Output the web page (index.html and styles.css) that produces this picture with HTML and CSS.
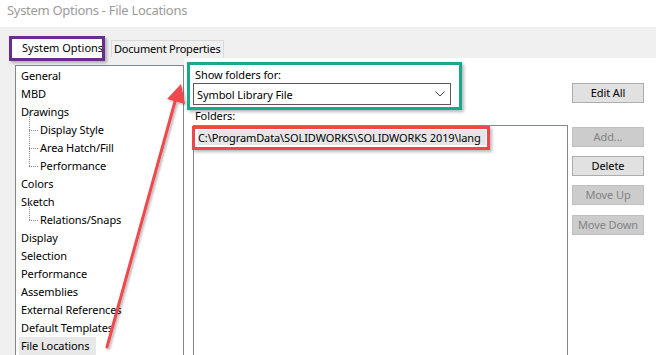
FILE: index.html
```html
<!DOCTYPE html>
<html>
<head>
<meta charset="utf-8">
<link rel="stylesheet" href="styles.css">
</head>
<body>
<div class="dialog">
  <div class="title">System Options - File Locations</div>
  <div class="tabs">
    <div class="tab active">System Options<span class="hl hl-purple"></span></div>
    <div class="tab">Document Properties</div>
  </div>
  <div class="main">
    <div class="tree">
      <div class="item">General</div>
      <div class="item">MBD</div>
      <div class="item">Drawings</div>
      <div class="group">
        <div class="item child">Display Style</div>
        <div class="item child">Area Hatch/Fill</div>
        <div class="item child last">Performance</div>
      </div>
      <div class="item">Colors</div>
      <div class="item">Sketch</div>
      <div class="group">
        <div class="item child last">Relations/Snaps</div>
      </div>
      <div class="item">Display</div>
      <div class="item">Selection</div>
      <div class="item">Performance</div>
      <div class="item">Assemblies</div>
      <div class="item">External References</div>
      <div class="item">Default Templates</div>
      <div class="item"><span class="sel">File Locations</span></div>
    </div>
    <div class="page">
      <div class="content">
        <div class="show">
          <div class="label">Show folders for:</div>
          <div class="combo">
            <span>Symbol Library File</span>
            <svg class="chev" width="10" height="6" viewBox="0 0 10 6"><path d="M0.5 0.5 L5 5 L9.5 0.5" fill="none" stroke="#444" stroke-width="1"/></svg>
          </div>
          <span class="hl hl-teal"></span>
        </div>
        <div class="label folders">Folders:</div>
        <div class="list">
          <div class="row">C:\ProgramData\SOLIDWORKS\SOLIDWORKS 2019\lang<span class="hl hl-red"></span></div>
        </div>
      </div>
      <div class="buttons">
        <div class="btn editall">Edit All</div>
        <div class="btn disabled">Add...</div>
        <div class="btn">Delete</div>
        <div class="btn disabled">Move Up</div>
        <div class="btn disabled">Move Down</div>
      </div>
    </div>
  </div>
  <svg class="arrow" width="656" height="355" viewBox="0 0 656 355">
    <defs>
      <filter id="sh" x="-20%" y="-20%" width="140%" height="140%">
        <feDropShadow dx="1.5" dy="1.5" stdDeviation="1.2" flood-color="#000" flood-opacity="0.3"/>
      </filter>
    </defs>
    <g filter="url(#sh)">
      <line x1="107" y1="347" x2="176" y2="98" stroke="#f0484b" stroke-width="3" stroke-linecap="round"/>
      <polygon points="181,84 167,99 185,104" fill="#f0484b"/>
    </g>
  </svg>
</div>
</body>
</html>
```
FILE: styles.css
```css
* { box-sizing: border-box; }
html, body { margin: 0; padding: 0; }
body {
  width: 656px;
  height: 355px;
  overflow: hidden;
  background: #f0f0f0;
  font-family: "Noto Sans", "Open Sans", sans-serif;
  font-size: 11px;
  letter-spacing: -0.1px;
  color: #000;
}
.dialog {
  position: relative;
  width: 656px;
  height: 355px;
  overflow: hidden;
}
.title {
  height: 27px;
  padding: 0 0 0 7px;
  font-size: 13px;
  letter-spacing: -0.3px;
  color: #9b9b9b;
  background: #fff;
  line-height: 20px;
}
.tabs {
  display: flex;
  align-items: flex-end;
  height: 31px;
  padding-left: 11px;
  gap: 7px;
}
.tab {
  position: relative;
  height: 17px;
  line-height: 16px;
  padding: 0 2px;
  border: 1px solid #d9d9d9;
  border-bottom: none;
  background: #f0f0f0;
  margin-bottom: 1px;
  white-space: nowrap;
  letter-spacing: -0.2px;
}
.tab.active {
  height: 21px;
  padding: 2px 0 0 10px;
  width: 93px;
  background: #fff;
  border-color: #fff;
  margin-bottom: 0;
  letter-spacing: 0;
}
.hl {
  position: absolute;
  pointer-events: none;
  border-style: solid;
  border-width: 3px;
  box-shadow: 2px 2px 3px rgba(0,0,0,0.28);
}
.hl-purple {
  left: -3px; top: -2px; right: -2px; bottom: -3px;
  border-color: #672d91;
}
.main {
  display: flex;
  padding-left: 15px;
  height: 297px;
}
.tree {
  width: 169px;
  background: #fff;
  border: 1px solid #828790;
  border-bottom: none;
  padding: 1px 0 0 5px;
  margin-top: 7px;
}
.item {
  height: 18px;
  line-height: 18px;
  white-space: nowrap;
}
.group .child {
  position: relative;
  padding-left: 19px;
}
.group .child::before {
  content: "";
  position: absolute;
  left: 8px;
  top: -9px;
  height: 18px;
  border-left: 1px dotted #8a8a8a;
}
.group .child::after {
  content: "";
  position: absolute;
  left: 8px;
  top: 9px;
  width: 9px;
  border-top: 1px dotted #8a8a8a;
}
.sel {
  display: inline-block;
  background: #e8e8e8;
  margin-left: -2px;
  padding: 0 7px 0 2px;
}
.page {
  flex: 1;
  display: flex;
  background: #fff;
  padding-left: 9px;
}
.content {
  width: 375px;
}
.show {
  position: relative;
  padding-top: 9px;
  width: 258px;
}
.label {
  padding-left: 2px;
  height: 16px;
  line-height: 16px;
}
.combo {
  height: 22px;
  border: 1px solid #5a5a5a;
  display: flex;
  align-items: center;
  justify-content: space-between;
  padding: 0 5px 0 3px;
  background: #fff;
}
.hl-teal {
  left: -6px; top: 4px; right: -11px; bottom: -5px;
  border-color: #18a98b;
}
.folders {
  margin-top: 2px;
  height: 18px;
  line-height: 18px;
}
.list {
  height: 240px;
  border: 1px solid #828790;
  border-bottom: none;
  padding: 4px 0 0 4px;
}
.row {
  position: relative;
  width: 288px;
  height: 15px;
  line-height: 15px;
  white-space: nowrap;
  background: #e6e6e6;
}
.hl-red {
  left: -6px; top: -4px; width: 298px; bottom: -5px;
  border-color: #f0464a;
}
.buttons {
  display: flex;
  flex-direction: column;
  padding: 25px 0 0 4px;
}
.btn {
  width: 72px;
  height: 20px;
  line-height: 18px;
  text-align: center;
  background: #e1e1e1;
  border: 1px solid #adadad;
  margin-bottom: 9.2px;
}
.btn.editall { margin-bottom: 24px; }
.btn.disabled {
  background: #cccccc;
  border-color: #bfbfbf;
  color: #838383;
}
.arrow {
  position: absolute;
  left: 0;
  top: 0;
  pointer-events: none;
}
```
